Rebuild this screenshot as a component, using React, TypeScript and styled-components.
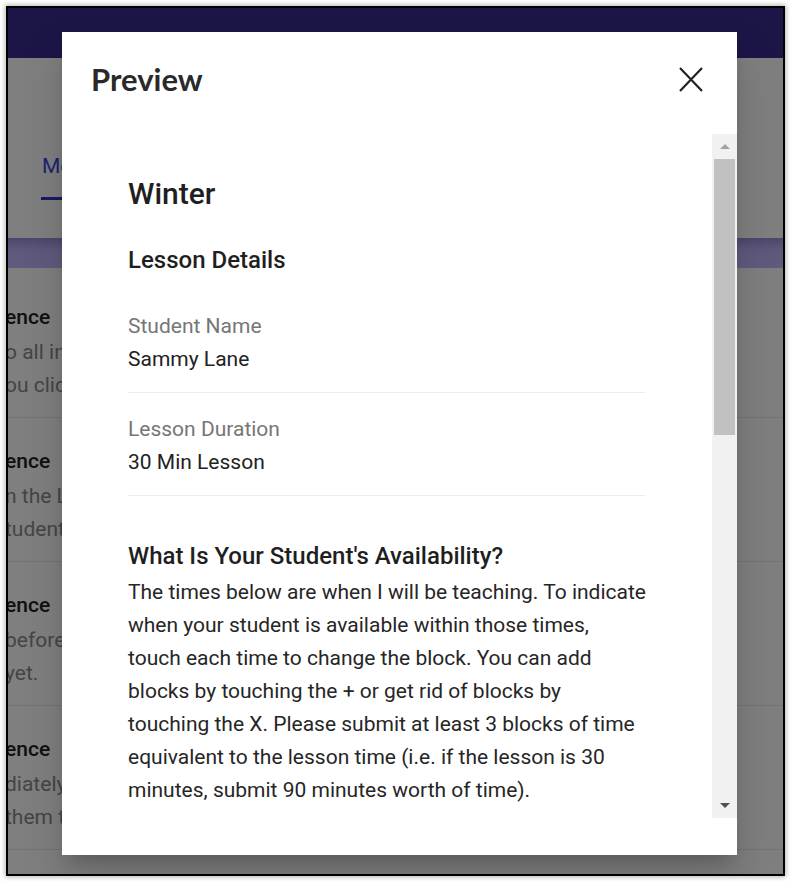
import React from "react";
import styled, { createGlobalStyle } from "styled-components";

const GlobalStyle = createGlobalStyle`
  html, body {
    margin: 0;
    padding: 0;
    background: #ffffff;
  }
  body {
    font-family: Roboto, "Liberation Sans", sans-serif;
  }
  * {
    box-sizing: border-box;
  }
`;

/* ---------- screen frame ---------- */

const Screen = styled.div`
  padding: 6px;
`;

const Frame = styled.div`
  position: relative;
  width: 779px;
  height: 870px;
  border: 2px solid #000;
  box-shadow: 0 0 5px 1px rgba(0, 0, 0, 0.3);
  overflow: hidden;
  background: #ffffff;
`;

/* ---------- page behind the dialog ---------- */

const NavBar = styled.div`
  height: 50px;
  background: #362c8e;
`;

const TabBar = styled.div`
  height: 180px;
  padding: 92px 0 0 34px;
`;

const Tab = styled.div`
  display: inline-flex;
  flex-direction: column;
  gap: 14px;
  color: #3d47e0;
  font-size: 21px;
  line-height: 33px;

  &::after {
    content: "";
    display: block;
    height: 3px;
    margin-left: -1px;
    background: #2a36c8;
  }
`;

const Band = styled.div`
  height: 30px;
  background: linear-gradient(180deg, #988fd8 0%, #bdb3f8 40%, #c2b8fc 100%);
`;

const SettingsList = styled.div`
  padding-top: 6px;
`;

const SettingsRow = styled.div`
  padding: 27px 0 15px;
  border-bottom: 1px solid #e8e8e8;
`;

const RowTitle = styled.div`
  margin: 0 0 2px -3px;
  font-size: 21px;
  line-height: 33px;
  font-weight: 500;
  color: #222222;
  white-space: nowrap;
`;

const RowText = styled.div`
  margin-left: -3px;
  font-size: 21px;
  line-height: 33px;
  color: #8a8a8a;
  white-space: nowrap;
`;

const Backdrop = styled.div`
  position: absolute;
  inset: 0;
  background: rgba(0, 0, 0, 0.5);
`;

/* ---------- dialog ---------- */

const Dialog = styled.div`
  position: absolute;
  left: 54px;
  top: 24px;
  width: 675px;
  height: 823px;
  display: flex;
  flex-direction: column;
  padding-bottom: 37px;
  background: #ffffff;
  box-shadow: 0 11px 15px -7px rgba(0, 0, 0, 0.2), 0 24px 38px 3px rgba(0, 0, 0, 0.14);
`;

const DialogHeader = styled.div`
  flex: 0 0 102px;
  display: flex;
  justify-content: space-between;
  align-items: flex-start;
  padding: 29px 34px 0 29px;
`;

const DialogTitle = styled.h2`
  margin: 0;
  font-family: Lato, "Liberation Sans", sans-serif;
  font-size: 31px;
  line-height: 37px;
  font-weight: 700;
  color: #2a2a2a;
`;

const CloseButton = styled.button`
  width: 24px;
  height: 25px;
  margin-top: 6px;
  padding: 0;
  border: 0;
  background: none;
  color: #222222;
  cursor: pointer;

  svg {
    display: block;
  }
`;

const DialogBody = styled.div`
  flex: 1;
  display: flex;
  min-height: 0;
`;

const ScrollContent = styled.div`
  flex: 1;
  overflow: hidden;
  padding: 42px 67px 0 66px;
  color: #212121;
`;

const ScrollBar = styled.div`
  width: 25px;
  display: flex;
  flex-direction: column;
  background: #f1f1f1;
`;

const ScrollArrow = styled.div<{ $dir: "up" | "down"; $active?: boolean }>`
  height: 25px;
  display: flex;
  align-items: center;
  justify-content: center;

  &::before {
    content: "";
    width: 0;
    height: 0;
    border-left: 5px solid transparent;
    border-right: 5px solid transparent;
    ${({ $dir, $active }) =>
      $dir === "up"
        ? `border-bottom: 5px solid ${$active ? "#505050" : "#a3a3a3"};`
        : `border-top: 5px solid ${$active ? "#505050" : "#a3a3a3"};`}
  }
`;

const ScrollTrack = styled.div`
  flex: 1;
  padding: 0 2px;
`;

const ScrollThumb = styled.div`
  background: #c1c1c1;
`;

const LessonName = styled.h1`
  margin: 0;
  font-size: 30px;
  line-height: 36px;
  font-weight: 500;
  color: #1f1f1f;
`;

const SectionTitle = styled.h3`
  margin: 34px 0 0;
  font-size: 24px;
  line-height: 29px;
  font-weight: 500;
  color: #1f1f1f;
`;

const Fields = styled.div`
  margin-top: 15px;
`;

const Field = styled.div`
  padding: 20px 0 16px;
  border-bottom: 1px solid #ececec;
`;

const FieldLabel = styled.div`
  font-size: 21px;
  line-height: 33px;
  color: #767676;
`;

const FieldValue = styled.div`
  font-size: 21px;
  line-height: 33px;
  color: #222222;
`;

const QuestionTitle = styled.h4`
  margin: 44px 0 0;
  font-size: 24px;
  line-height: 33px;
  font-weight: 500;
  color: #1f1f1f;
`;

const Paragraph = styled.p`
  margin: 3px -1.5px 0 0;
  font-size: 21px;
  line-height: 33px;
  color: #262626;
`;

const settingsRows = [
  { title: "ence", lines: ["o all in", "ou clic"] },
  { title: "ence", lines: ["n the L", "tudent"] },
  { title: "ence", lines: ["before", "yet."] },
  { title: "ence", lines: ["diately", "them t"] },
];

const fields = [
  { label: "Student Name", value: "Sammy Lane" },
  { label: "Lesson Duration", value: "30 Min Lesson" },
];

const CloseIcon = () => (
  <svg width="24" height="25" viewBox="0 0 24 25" fill="none">
    <path d="M1 1 L23 24 M23 1 L1 24" stroke="currentColor" strokeWidth="2.2" />
  </svg>
);

export default function App() {
  const visible = 684;
  const content = 1572;
  const thumb = Math.round(((visible - 50) * visible) / content);

  return (
    <>
      <GlobalStyle />
      <Screen>
        <Frame>
          <NavBar />
          <TabBar>
            <Tab>Messages</Tab>
          </TabBar>
          <Band />
          <SettingsList>
            {settingsRows.map((row, i) => (
              <SettingsRow key={i}>
                <RowTitle>{row.title}</RowTitle>
                {row.lines.map((line) => (
                  <RowText key={line}>{line}</RowText>
                ))}
              </SettingsRow>
            ))}
          </SettingsList>

          <Backdrop />

          <Dialog role="dialog" aria-label="Preview">
            <DialogHeader>
              <DialogTitle>Preview</DialogTitle>
              <CloseButton aria-label="Close">
                <CloseIcon />
              </CloseButton>
            </DialogHeader>

            <DialogBody>
              <ScrollContent>
                <LessonName>Winter</LessonName>
                <SectionTitle>Lesson Details</SectionTitle>
                <Fields>
                  {fields.map((f) => (
                    <Field key={f.label}>
                      <FieldLabel>{f.label}</FieldLabel>
                      <FieldValue>{f.value}</FieldValue>
                    </Field>
                  ))}
                </Fields>
                <QuestionTitle>What Is Your Student's Availability?</QuestionTitle>
                <Paragraph>
                  The times below are when I will be teaching. To indicate when your student is
                  available within those times, touch each time to change the block. You can add
                  blocks by touching the + or get rid of blocks by touching the X. Please submit at
                  least 3 blocks of time equivalent to the lesson time (i.e. if the lesson is 30
                  minutes, submit 90 minutes worth of time).
                </Paragraph>
              </ScrollContent>

              <ScrollBar>
                <ScrollArrow $dir="up" />
                <ScrollTrack>
                  <ScrollThumb style={{ height: thumb }} />
                </ScrollTrack>
                <ScrollArrow $dir="down" $active />
              </ScrollBar>
            </DialogBody>
          </Dialog>
        </Frame>
      </Screen>
    </>
  );
}
